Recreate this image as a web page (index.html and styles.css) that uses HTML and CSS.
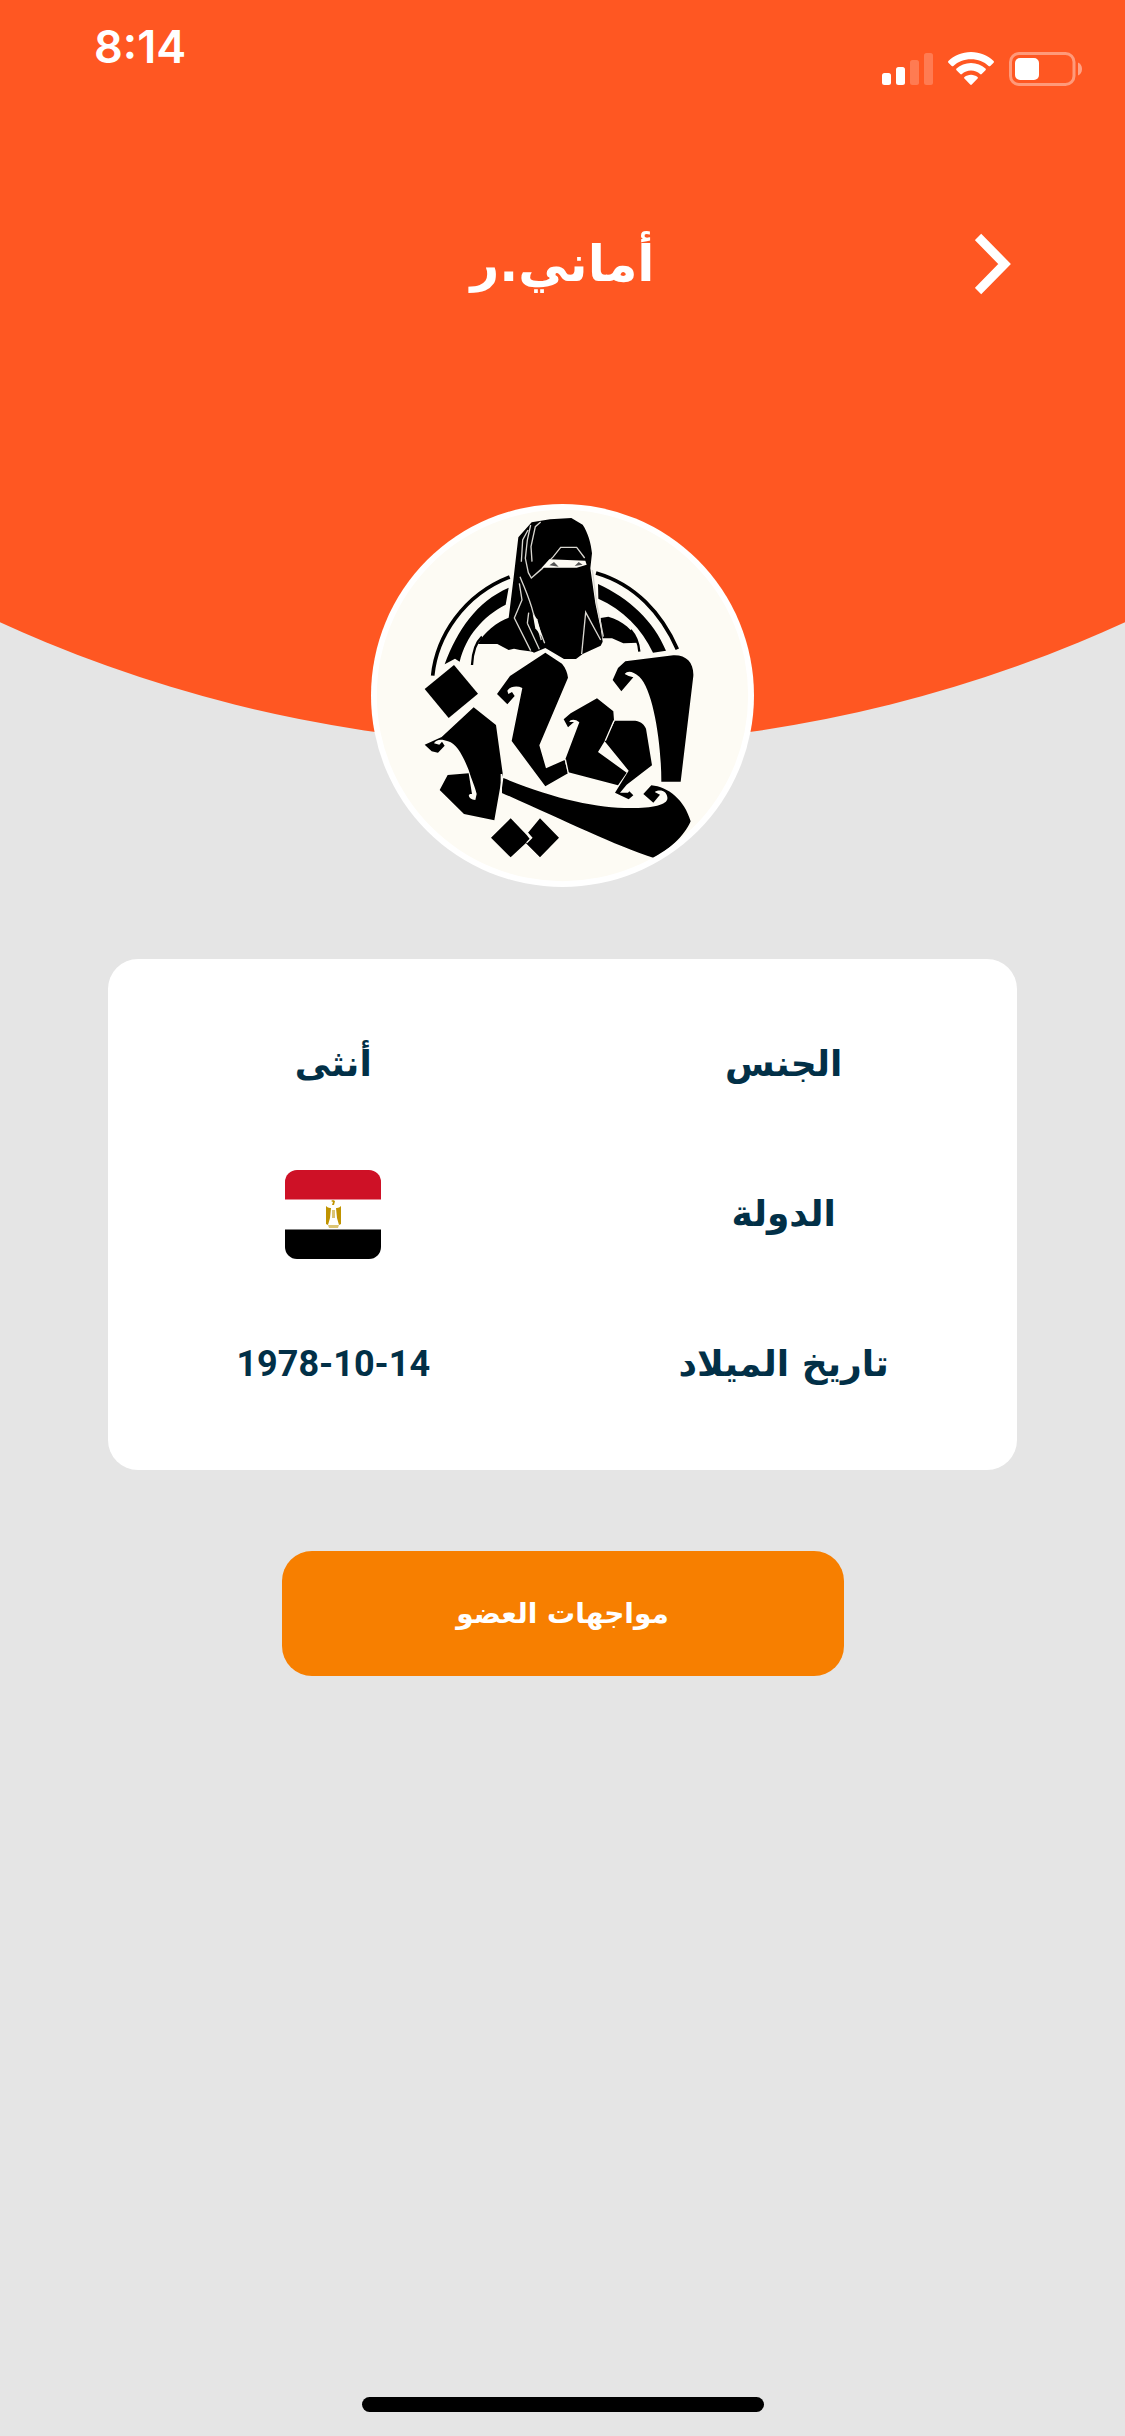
FILE: index.html
```html
<!DOCTYPE html>
<html lang="ar" dir="rtl">
<head>
<meta charset="utf-8">
<meta name="viewport" content="width=device-width, initial-scale=1">
<title>أماني.ر</title>
<link rel="stylesheet" href="styles.css">
</head>
<body>
<div class="screen">
  <header class="hero">
    <div class="status" dir="ltr">
      <time class="clock">8:14</time>
      <div class="status-icons">
        <svg width="51" height="34" viewBox="0 0 51 34" fill="#fff" aria-hidden="true">
          <rect x="0" y="21" width="9" height="12" rx="2.5"/>
          <rect x="14" y="15" width="9" height="18" rx="2.5"/>
          <rect x="28" y="8" width="9" height="25" rx="2.5" opacity=".22"/>
          <rect x="42" y="1" width="9" height="32" rx="2.5" opacity=".22"/>
        </svg>
        <svg width="46" height="34" viewBox="0 0 46 34" fill="#fff" aria-hidden="true">
          <path d="M23 0C14 0 6 3.500 .4 9c-.5.500-.5 1.200 0 1.700l3.300 3.200c.5.500 1.200.5 1.700 0C10 9.600 16 7.200 23 7.200s13 2.400 17.600 6.700c.5.5 1.200.5 1.700 0l3.300-3.200c.5-.5.5-1.200 0-1.700C40 3.500 32 0 23 0z"/>
          <path d="M23 11c-5.600 0-10.700 2.100-14.500 5.600-.5.500-.5 1.200 0 1.700l3.800 3.800c.5.500 1.100.5 1.600 0 2.400-2.200 5.600-3.500 9.100-3.500s6.700 1.300 9.100 3.500c.5.500 1.100.5 1.600 0l3.800-3.800c.5-.5.5-1.200 0-1.700C33.700 13.100 28.600 11 23 11z"/>
          <path d="M23 22.800c-2.500 0-4.700.9-6.500 2.300-.5.400-.5 1.100-.1 1.500l5.800 5.900c.5.500 1.100.5 1.600 0l5.800-5.900c.4-.4.400-1.100-.1-1.500-1.800-1.400-4-2.300-6.500-2.300z"/>
        </svg>
        <svg width="73" height="34" viewBox="0 0 73 34" aria-hidden="true">
          <rect x="1.500" y="1.500" width="63.500" height="31" rx="8.500" fill="none" stroke="#fff" stroke-width="3" opacity=".4"/>
          <rect x="6" y="6" width="24" height="22" rx="5" fill="#fff"/>
          <path d="M69 10.500c2.500 1 4 3.500 4 6.500s-1.500 5.500-4 6.500z" fill="#fff" opacity=".45"/>
        </svg>
      </div>
    </div>
    <div class="title-bar">
      <button class="back" type="button" aria-label="رجوع">
        <svg width="38" height="62" viewBox="0 0 38 62" fill="none" stroke="#fff" stroke-width="9" aria-hidden="true"><path d="M3 4 29.600 31 3 58"/></svg>
      </button>
      <h1 class="name">أماني.ر</h1>
    </div>
  </header>

  <main class="profile">
    <svg class="avatar" viewBox="33 42 1149 1149" role="img" aria-label="صورة العضو">
      <defs><clipPath id="disc"><circle cx="607.500" cy="616.500" r="557"/></clipPath></defs>
      <circle cx="607.500" cy="616.500" r="574.500" fill="#fff"/>
      <circle cx="607.500" cy="616.500" r="557" fill="#fdfbf4"/>
      <g clip-path="url(#disc)">
        <g fill="none" stroke="#000">
          <path d="M218 557C230 440 310 315 449 261M708 249C825 283 905 370 952 478" stroke-width="11"/>
          <path d="M336 525C338 480 350 455 366 440M812 420C830 440 836 460 838 485" stroke-width="7"/>
        </g>
        <path d="M254 523C292 420 350 335 446 293L437 344C368 380 318 438 299 515L285 506Z"/>
        <path d="M714 282C808 325 880 392 918 482L879 488C845 415 790 360 715 326Z"/>
        <path d="M354 462C370 430 410 395 450 382L520 485 480 480 462 476 446 480 412 462ZM722 384 745 380C788 392 822 420 834 458L790 460 756 445 728 445Z"/>
        <path d="M475 142 515 97 570 88 634 84 668 104C684 128 693 160 696 190L691 235 706 340 722 415 728 455 722 467 668 492 648 507H612L556 474 522 488 492 470 446 384 460 270Z"/>
        <g fill="none" stroke="#d8d6d0" stroke-width="4">
          <path d="M549 234 514 264 505 248 496 205 502 150 512 105M514 264 545 236 580 200 602 172H650L674 204M516 215 513 170 526 110 542 96M484 215 488 150 504 120M480 260C500 310 510 330 520 370L554 460M478 280 486 330 463 384 512 482M502 400 538 478M502 400 506 368M524 380 544 450M665 492 677 367 722 450M677 367 690 390M697 240 710 340 730 440"/>
        </g>
        <path d="M568 208 676 212 680 224 650 233H546Z" fill="#fdfbf4"/>
        <path d="M568 226 582 216 596 230ZM644 228 656 216 668 224Z" fill="#555"/>
        <path d="M518 372 532 388 546 440 526 415Z" fill="#fdfbf4"/>
        <path d="M282 525 354 611 266 684 194 597Z"/>
        <path d="M341 652 408 705 428 850 403 991 312 972 239 900 263 855 326 850 336 912C318 910 328 930 346 930L350 912C345 890 335 870 326 840C310 800 290 760 264 754C245 746 228 748 222 760L238 764 246 755 254 767 234 788 215 784 194 764 245 741Z"/>
        <path d="M556 488 606 521C618 535 622 548 624 563L538 766 558 835 614 810 624 850 556 889 455 753 487 594C470 586 450 590 442 602L445 612 456 606 464 618 442 643 411 612 450 558Z"/>
        <path d="M711 625 760 664 762 690 742 740 714 786 800 848 774 886 622 846 616 808 658 697C646 686 630 688 628 696L642 696 624 712 611 688 632 670Z"/>
        <path d="M764 692 826 692C846 696 852 704 858 716L876 826 800 884 780 908 804 908 808 904 820 916 806 928 765 908 806 842 734 754Z"/>
        <path d="M796 514 940 496C978 494 1002 518 1000 558L962 875H904C904 760 880 600 838 560C818 544 804 540 794 552L806 558 820 562 784 604 758 570 774 534Z"/>
        <path d="M430 864C580 926 710 954 812 954C880 954 926 944 922 922C920 904 902 896 884 906L900 914 880 938 850 912 874 886C924 890 974 930 992 994C974 1038 920 1085 882 1104C760 1065 610 990 424 908Z"/>
        <path d="M452 985 500 1035 510 1048 452 1102 393 1043ZM540 985 597 1043 540 1102 498 1060 516 1043 504 1028Z"/>
        <path d="M762 692 736 752M616 808 625 850M498 1025 515 1043 500 1058M424 852V910" fill="none" stroke="#fdfbf4" stroke-width="4"/>
      </g>
    </svg>

    <dl class="card">
      <div class="row">
        <dt class="label">الجنس</dt>
        <dd class="value">أنثى</dd>
      </div>
      <div class="row">
        <dt class="label">الدولة</dt>
        <dd class="value">
          <svg class="flag" width="96" height="89" viewBox="0 0 96 89" role="img" aria-label="مصر">
            <defs><clipPath id="flag-shape"><rect width="96" height="89" rx="12"/></clipPath></defs>
            <g clip-path="url(#flag-shape)">
              <path fill="#fff" d="M0 0h96v89H0z"/>
              <path fill="#ce1126" d="M0 0h96v29.500H0z"/>
              <path fill="#000" d="M0 59.500h96V89H0z"/>
            </g>
            <g fill="#c09300">
              <path d="M41 36c2 2 4 2 5 2l-1 10-2 7-2-1zM56 36c-2 2-4 2-5 2l1 10 2 7 2-1z"/>
              <path d="M46 31l2-1 2 1-1 4h-2l1-3z"/>
              <path d="M47 40h3v8h-3zM43 55h11l-1 3h-9z" opacity=".55"/>
            </g>
          </svg>
        </dd>
      </div>
      <div class="row">
        <dt class="label">تاريخ الميلاد</dt>
        <dd class="value"><time class="date" dir="ltr" datetime="1978-10-14">1978-10-14</time></dd>
      </div>
    </dl>

    <button class="action" type="button">مواجهات العضو</button>
  </main>

  <div class="home-bar"></div>
</div>
</body>
</html>
```
FILE: styles.css
```css
* {
  box-sizing: border-box;
}

body {
  margin: 0;
  background: #e5e5e5;
  color: #023047;
  font-family: "DejaVu Sans", sans-serif;
}

.screen {
  display: flex;
  flex-direction: column;
  min-height: 100vh;
}

/* Orange header ending in the arc of a large circle */
.hero {
  height: 745px;
  background: #ff5722;
  color: #fff;
  clip-path: circle(120vw at 50% calc(100% - 120vw));
}

.status {
  display: flex;
  justify-content: space-between;
  padding: 20px 43px 0 94px;
}

.clock {
  font: 600 45px/54px Inter, sans-serif;
}

.status-icons {
  display: flex;
  gap: 15px;
  padding-top: 32px;
}

.title-bar {
  display: grid;
  grid-template-columns: 1fr auto 1fr;
  align-items: center;
  margin-top: 138px;
  padding: 0 112px;
}

.back {
  display: flex;
  justify-self: start;
  padding: 0;
  border: 0;
  background: none;
}

.name {
  margin: 0;
  font-size: 50px;
  line-height: 80px;
  font-weight: 700;
}

.profile {
  display: flex;
  flex: 1;
  flex-direction: column;
  align-items: center;
  padding: 0 108px;
}

.avatar {
  width: 383px;
  height: 383px;
  margin-top: -241px;
  z-index: 1;
}

.card {
  align-self: stretch;
  margin: 72px 0 0;
  padding: 30px 0 31px;
  border-radius: 30px;
  background: #fff;
}

.row {
  display: grid;
  grid-template-columns: 1fr 1fr;
  align-items: center;
  height: 150px;
  padding-right: 8px;
}

.label,
.value {
  margin: 0;
  text-align: center;
  font-size: 36px;
  line-height: 48px;
  font-weight: 700;
}

.flag {
  display: block;
  margin: 0 auto;
}

.date {
  font-family: Roboto, sans-serif;
}

.action {
  width: 562px;
  max-width: 100%;
  height: 125px;
  margin-top: 81px;
  border: 0;
  border-radius: 30px;
  background: #f77f00;
  color: #fff;
  font: 700 28px/40px "DejaVu Sans", sans-serif;
}

.home-bar {
  width: 402px;
  height: 15px;
  margin: 24px auto;
  border-radius: 8px;
  background: #000;
}
```
